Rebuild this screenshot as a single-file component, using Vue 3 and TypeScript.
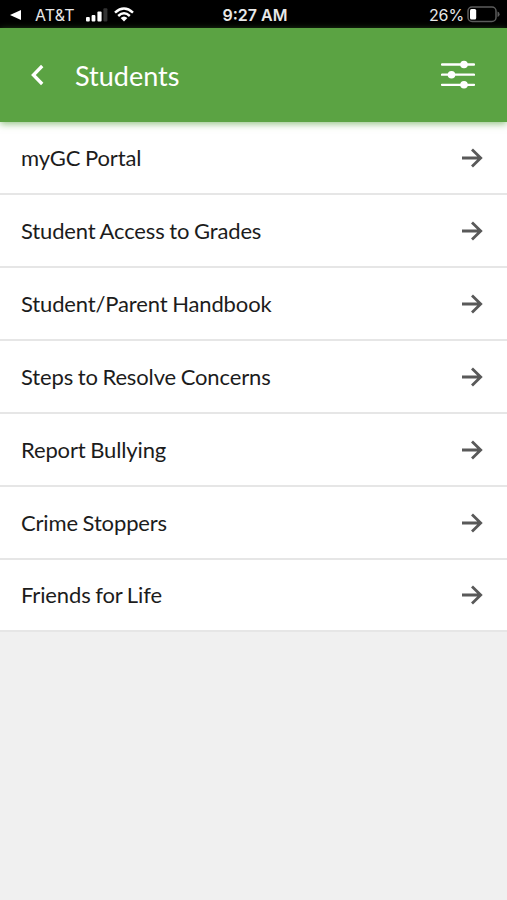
<script setup lang="ts">
const links: string[] = [
  'myGC Portal',
  'Student Access to Grades',
  'Student/Parent Handbook',
  'Steps to Resolve Concerns',
  'Report Bullying',
  'Crime Stoppers',
  'Friends for Life',
]
</script>

<template>
  <div class="screen">
    <div class="status">
      <div class="side">
        <svg class="back-app" width="11" height="10" viewBox="0 0 11 10"><path d="M0 5L11 0V10Z" fill="#fff" /></svg>
        <span class="carrier">AT&amp;T</span>
        <svg class="signal" width="22" height="14" viewBox="0 0 22 14">
          <rect x="0" y="9" width="3.8" height="4.5" rx="1" fill="#fff" />
          <rect x="5.6" y="7" width="3.8" height="6.5" rx="1" fill="#fff" />
          <rect x="11.4" y="3.6" width="4.2" height="9.9" rx="1" fill="#fff" />
          <rect x="17.4" y="0.3" width="4" height="13.2" rx="1" fill="#333" />
        </svg>
        <svg class="wifi" width="20" height="15" viewBox="0 0 20 15" fill="none" stroke="#fff" stroke-width="2.5">
          <path d="M1 5.6Q10-2.6 19 5.6" />
          <path d="M4.2 9Q10 3.6 15.8 9" />
          <path d="M10 14.5L6.6 11.1Q10 8 13.4 11.1Z" fill="#fff" stroke="none" />
        </svg>
      </div>
      <span class="time">9:27 AM</span>
      <div class="side right">
        <span class="percent">26%</span>
        <svg width="33" height="17" viewBox="0 0 33 17">
          <rect x="1" y="1" width="28" height="14.5" rx="4" fill="none" stroke="#5c5c5c" stroke-width="1.5" />
          <rect x="3" y="3" width="6.2" height="10.5" rx="1.5" fill="#fff" />
          <path d="M30.5 5.5Q32.6 6.3 32.6 8.2T30.5 11Z" fill="#5c5c5c" />
        </svg>
      </div>
    </div>

    <header class="bar">
      <svg class="chevron" width="14" height="22" viewBox="0 0 14 22">
        <path d="M12.2 2L3.4 11L12.2 20" fill="none" stroke="#fff" stroke-width="3.3" />
      </svg>
      <h1>Students</h1>
      <svg class="filters" width="34" height="30" viewBox="0 0 34 30" fill="#fff">
        <path d="M1 4.5H33M1 14.7H33M1 24.8H33" stroke="#fff" stroke-width="2.3" stroke-linecap="round" />
        <circle cx="23" cy="4.5" r="3.8" />
        <circle cx="10.5" cy="14.7" r="3.8" />
        <circle cx="23" cy="24.8" r="3.8" />
      </svg>
    </header>

    <ul class="list">
      <li v-for="link in links" :key="link">
        <span>{{ link }}</span>
        <svg width="22" height="20" viewBox="0 0 22 20" fill="none" stroke="#595959" stroke-width="2.8">
          <path d="M1 10H19.5M11 1.5L19.7 10L11 18.5" />
        </svg>
      </li>
    </ul>
  </div>
</template>

<style>
body {
  margin: 0;
  background: #f0f0f0;
}
</style>

<style scoped>
.screen {
  height: 900px;
  display: flex;
  flex-direction: column;
  background: #f0f0f0;
  font-family: Lato, sans-serif;
  overflow: hidden;
}
.status {
  height: 28px;
  flex: none;
  display: grid;
  grid-template-columns: 1fr auto 1fr;
  align-items: center;
  box-sizing: border-box;
  padding: 1px 7px 0 10px;
  background: #000;
  color: #e8e8e8;
  font-family: Inter, sans-serif;
  font-size: 16px;
  line-height: 20px;
}
.side {
  display: flex;
  align-items: center;
}
.right {
  justify-content: flex-end;
  gap: 3px;
}
.carrier {
  margin-left: 14px;
  width: 40px;
  letter-spacing: 0.1px;
}
.signal {
  margin-left: 11px;
}
.wifi {
  margin-left: 6px;
}
.time {
  font-weight: 600;
}
.percent {
  letter-spacing: -0.1px;
}
.bar {
  height: 94px;
  flex: none;
  display: flex;
  align-items: center;
  box-sizing: border-box;
  padding: 0 32px 0 30px;
  background: #5ba343;
  box-shadow: 0 2px 7px rgba(91, 163, 67, 0.65);
  z-index: 1;
}
h1 {
  flex: 1;
  margin: 1px 0 0 31px;
  color: #fff;
  font-size: 27px;
  font-weight: 400;
  line-height: 34px;
}
.list {
  margin: 0;
  padding: 0;
  list-style: none;
}
li {
  height: 72.85px;
  display: flex;
  align-items: center;
  justify-content: space-between;
  box-sizing: border-box;
  padding: 1px 24px 0 21px;
  border-bottom: 2px solid #e6e6e6;
  background: #fff;
  color: #1c1c1c;
  font-size: 22px;
  line-height: 28px;
  letter-spacing: -0.14px;
  word-spacing: -0.8px;
}
li:first-child {
  height: 73.35px;
}
</style>
